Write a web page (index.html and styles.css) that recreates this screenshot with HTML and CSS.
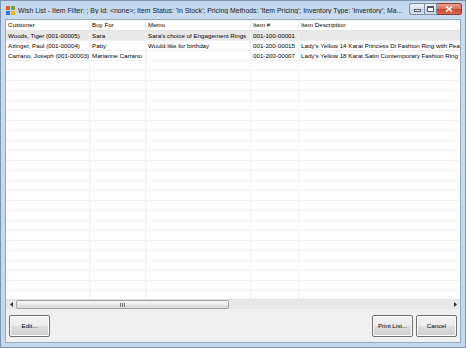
FILE: index.html
```html
<!DOCTYPE html>
<html>
<head>
<meta charset="utf-8">
<link rel="stylesheet" href="styles.css">
</head>
<body>
<div class="window">
  <div class="titlebar">
    <svg class="appicon" width="9" height="9" viewBox="0 0 9 9">
      <rect x="0" y="0" width="4" height="4" fill="#e05a2a"/>
      <rect x="5" y="0" width="4" height="4" fill="#6aa83a"/>
      <rect x="0" y="5" width="4" height="4" fill="#2f7ad0"/>
      <rect x="5" y="5" width="4" height="4" fill="#f2b21c"/>
    </svg>
    <span class="title">Wish List - Item Filter: ; By Id: &lt;none&gt;; Item Status: 'In Stock'; Pricing Methods: 'Item Pricing'; Inventory Type: 'Inventory'; Ma...</span>
    <div class="caption">
      <div class="cbtn min"><span class="glyph-min"></span></div>
      <div class="cbtn max"><span class="glyph-max"></span></div>
      <div class="cbtn close"><svg width="8" height="6" viewBox="0 0 8 6"><path d="M1 0.5 L7 5.5 M7 0.5 L1 5.5" stroke="#fff" stroke-width="1.6"/></svg></div>
    </div>
  </div>
  <div class="client">
    <div class="grid">
      <div class="row head">
        <div class="c c1">Customer</div><div class="c c2">Buy For</div><div class="c c3">Memo</div><div class="c c4">Item #</div><div class="c c5">Item Description</div>
      </div>
      <div class="row sel">
        <div class="c c1">Woods, Tiger (001-00005)</div><div class="c c2">Sara</div><div class="c c3">Sara's choice of Engagement Rings</div><div class="c c4">001-100-00001</div><div class="c c5"></div>
      </div>
      <div class="row">
        <div class="c c1">Azinger, Paul (001-00004)</div><div class="c c2">Patty</div><div class="c c3">Would like for birthday</div><div class="c c4">001-200-00015</div><div class="c c5">Lady's Yellow 14 Karat Princess Di Fashion Ring with Pearl</div>
      </div>
      <div class="row">
        <div class="c c1">Carrano, Joseph (001-00003)</div><div class="c c2">Marianne Carrano</div><div class="c c3"></div><div class="c c4">001-200-00007</div><div class="c c5">Lady's Yellow 18 Karat Satin Contemporary Fashion Ring with</div>
      </div>
      <div class="filler"></div>
    </div>
    <div class="hscroll">
      <div class="arrow"><svg width="3" height="5" viewBox="0 0 3 5"><path d="M3 0 L0 2.5 L3 5Z" fill="#333"/></svg></div>
      <div class="track">
        <div class="thumb"><span class="grip"></span></div>
      </div>
      <div class="arrow"><svg width="3" height="5" viewBox="0 0 3 5"><path d="M0 0 L3 2.5 L0 5Z" fill="#333"/></svg></div>
    </div>
    <div class="buttons">
      <button class="btn">Edit...</button>
      <div class="spacer"></div>
      <button class="btn">Print List...</button>
      <button class="btn">Cancel</button>
    </div>
  </div>
</div>
</body>
</html>
```
FILE: styles.css
```css
* { box-sizing: border-box; }
html, body { margin: 0; padding: 0; }
body {
  width: 466px; height: 348px; overflow: hidden;
  font-family: "Liberation Sans", Arial, sans-serif;
  font-size: 6.2px;
  color: #000;
  background: #fff;
}
.window {
  width: 466px; height: 348px;
  display: flex; flex-direction: column;
  background: linear-gradient(to bottom, #c2d6ec 0px, #cadcf0 20px, #c3d8ee 100%);
  border: 1px solid #7d95b1;
  padding: 0 4px 4px 4px;
}
.titlebar {
  height: 18px; flex: none;
  display: flex; align-items: center;
}
.appicon { margin: 0 3px 0 1px; flex: none; }
.title {
  font-family: "Liberation Sans", Arial, sans-serif;
  font-size: 6.9px; color: #1a1a1a;
  white-space: nowrap; overflow: hidden; flex: 1;
}
.caption { display: flex; align-self: flex-start; margin-top: 2px; margin-right: -1px; }
.cbtn {
  height: 12px; border: 1px solid #7a8ea8; display: flex; align-items: center; justify-content: center;
  background: linear-gradient(to bottom, #eaf1f9 0%, #d8e3f0 50%, #c6d4e6 51%, #d4e0ee 100%);
}
.cbtn.min { width: 15px; border-radius: 3px 0 0 3px; border-right: none; }
.cbtn.max { width: 13px; }
.cbtn.close { width: 25px; border-radius: 0 3px 3px 0; border-left: none; border-color: #8a3a30;
  background: linear-gradient(to bottom, #e8a394 0%, #d7705c 50%, #c7472f 51%, #d86a4f 100%); }
.glyph-min { width: 7px; height: 3px; border: 1px solid #556; background: #fff; margin-top: 3px; }
.glyph-max { width: 7px; height: 6px; border: 1px solid #556; border-top-width: 2px; background: #fff; }
.client {
  flex: 1; display: flex; flex-direction: column;
  background: #f0f0f0;
  border: 1px solid #96a8bd;
}
.grid {
  flex: 1; background: #fff; overflow: hidden; display: flex; flex-direction: column;
}
.row { display: flex; height: 10px; flex: none; border-bottom: 1px solid #f0f0f0; }
.row.head { height: 11px; border-bottom: 1px solid #e3e3e3; }
.row.sel { background: #e8e8e8; }
.c {
  border-right: 1px solid #f0f0f0; padding-left: 2px; line-height: 9px;
  white-space: nowrap; overflow: hidden; flex: none;
}
.head .c { line-height: 10px; border-right-color: #ececec; }
.c1 { width: 84px; }
.c2 { width: 56px; }
.c3 { width: 105px; }
.c4 { width: 48px; }
.c5 { flex: 1; border-right: none; }
.filler {
  flex: 1;
  background-image:
    linear-gradient(to right, transparent 83px, #f0f0f0 83px, #f0f0f0 84px, transparent 84px,
      transparent 139px, #f0f0f0 139px, #f0f0f0 140px, transparent 140px,
      transparent 244px, #f0f0f0 244px, #f0f0f0 245px, transparent 245px,
      transparent 292px, #f0f0f0 292px, #f0f0f0 293px, transparent 293px),
    linear-gradient(to bottom, transparent 9px, #f0f0f0 9px);
  background-size: 100% 100%, 100% 10px;
}
.hscroll {
  height: 10px; flex: none; display: flex; background: #e8e8e8;
  border-top: 1px solid #e0e0e0;
}
.arrow { width: 10px; display: flex; align-items: center; justify-content: center; }
.track { flex: 1; display: flex; padding: 0 0 1px 0; }
.thumb {
  width: 213px; height: 9px; border: 1px solid #a0a0a0; border-radius: 2px;
  background: linear-gradient(to bottom, #f6f6f6 0%, #ececec 50%, #dcdcdc 51%, #e0e0e0 100%);
  display: flex; align-items: center; justify-content: center;
}
.grip { width: 5px; height: 4px; background: repeating-linear-gradient(to right, #777 0, #777 1px, #ddd 1px, #ddd 2px); }
.buttons {
  height: 33px; flex: none; display: flex; align-items: center; padding: 0 3px 0 3px; gap: 3px;
}
.spacer { flex: 1; }
.btn {
  height: 22px; width: 41px; padding: 0;
  border: 1px solid #707070; border-radius: 2px;
  background: linear-gradient(to bottom, #f2f2f2 0%, #ebebeb 50%, #dddddd 51%, #cfcfcf 100%);
  font-family: "Liberation Sans", Arial, sans-serif; font-size: 6.2px; color: #000;
  box-shadow: inset 0 0 0 1px #fcfcfc;
}
```
